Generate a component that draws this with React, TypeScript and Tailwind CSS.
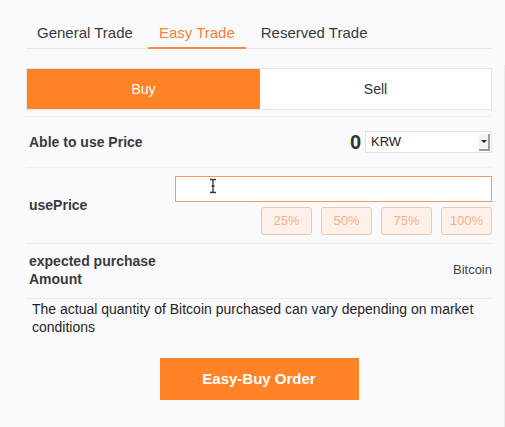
import React from "react";

const tabs = ["General Trade", "Easy Trade", "Reserved Trade"];
const percents = ["25%", "50%", "75%", "100%"];

export default function App() {
  return (
    <div className="flex h-[427px] w-[505px] bg-[#fafafc] text-[#333] font-['Liberation_Sans',Arial,sans-serif]">
      <div className="ml-[26px] w-[466px] flex flex-col">
        {/* tabs */}
        <div className="mt-[16px] flex gap-[4px] border-b border-[#e8e8ec]">
          {tabs.map((t) => {
            const active = t === "Easy Trade";
            return (
              <div
                key={t}
                className={`h-[33px] px-[11px] pt-[3px] flex items-center text-[15px] border-b-2 -mb-px ${
                  active ? "border-[#f58a43] text-[#f5813a]" : "border-transparent text-[#3a3a3a]"
                }`}
              >
                {t}
              </div>
            );
          })}
        </div>

        {/* buy / sell */}
        <div className="mt-[19px] flex h-[42px] border border-[#e6e6e9]">
          <div className="w-[233px] bg-[#ff8226] text-white text-[14px] flex items-center justify-center">Buy</div>
          <div className="flex-1 bg-white text-[14px] text-[#333] flex items-center justify-center">Sell</div>
        </div>

        {/* able to use price */}
        <div className="mt-[6px] h-[52px] border-t border-[#f0f0f3] border-b flex items-center justify-between pl-[3px]">
          <span className="text-[14px] font-bold text-[#3a3a3a]">Able to use Price</span>
          <div className="flex items-center gap-[4px]">
            <span className="text-[20px] font-bold text-[#333]">0</span>
            <div className="relative w-[127px] h-[22px] bg-white border border-[#e4e4e8] flex items-center pl-[5px] text-[13px] text-[#222]">
              KRW
              <div className="absolute right-[1px] top-[2px] w-[11px] h-[17px] bg-[#f2f2f2] border-r-2 border-b-2 border-[#9a9a9a] flex items-center justify-center">
                <div className="w-0 h-0 border-l-[3px] border-r-[3px] border-t-[3px] border-l-transparent border-r-transparent border-t-[#222]" />
              </div>
            </div>
          </div>
        </div>

        {/* use price */}
        <div className="h-[76px] border-b border-[#ebebef] flex pl-[3px]">
          <div className="w-[146px] flex items-center text-[14px] font-bold text-[#3a3a3a]">usePrice</div>
          <div className="flex-1 pt-[8px] flex flex-col items-end">
            <div className="relative w-full h-[26px] bg-white border border-[#f39a5c]">
              <svg className="absolute left-[33px] top-[1px]" width="8" height="16" viewBox="0 0 8 16">
                <path d="M1 1.5h2.2L4 2.5l.8-1H7M4 2.5v11M1 14.5h2.2L4 13.5l.8 1H7M2.5 8h3" stroke="#333" strokeWidth="1.3" fill="none" />
              </svg>
            </div>
            <div className="mt-[5px] flex gap-[9px]">
              {percents.map((p) => (
                <div
                  key={p}
                  className="w-[51px] h-[28px] rounded-[3px] border border-[#f5c6a6] bg-[#fdf0e8] text-[13px] text-[#f5b18a] flex items-center justify-center"
                >
                  {p}
                </div>
              ))}
            </div>
          </div>
        </div>

        {/* expected amount */}
        <div className="h-[55px] border-b border-[#ebebef] flex items-center justify-between pl-[3px]">
          <div className="text-[14px] font-bold leading-[18px] text-[#3a3a3a] pb-[2px]">
            expected purchase
            <br />
            Amount
          </div>
          <span className="text-[13px] text-[#444] pb-[2px]">Bitcoin</span>
        </div>

        <p className="mt-[1px] pl-[6px] text-[14px] leading-[18px] text-[#1f1f1f]">
          The actual quantity of Bitcoin purchased can vary depending on market conditions
        </p>

        <div className="mt-[22px] flex justify-center">
          <button className="w-[199px] h-[42px] bg-[#ff8226] text-white text-[15px] font-bold">Easy-Buy Order</button>
        </div>
      </div>
      <div className="ml-auto mt-[65px] w-px bg-[#ececef]" />
    </div>
  );
}
